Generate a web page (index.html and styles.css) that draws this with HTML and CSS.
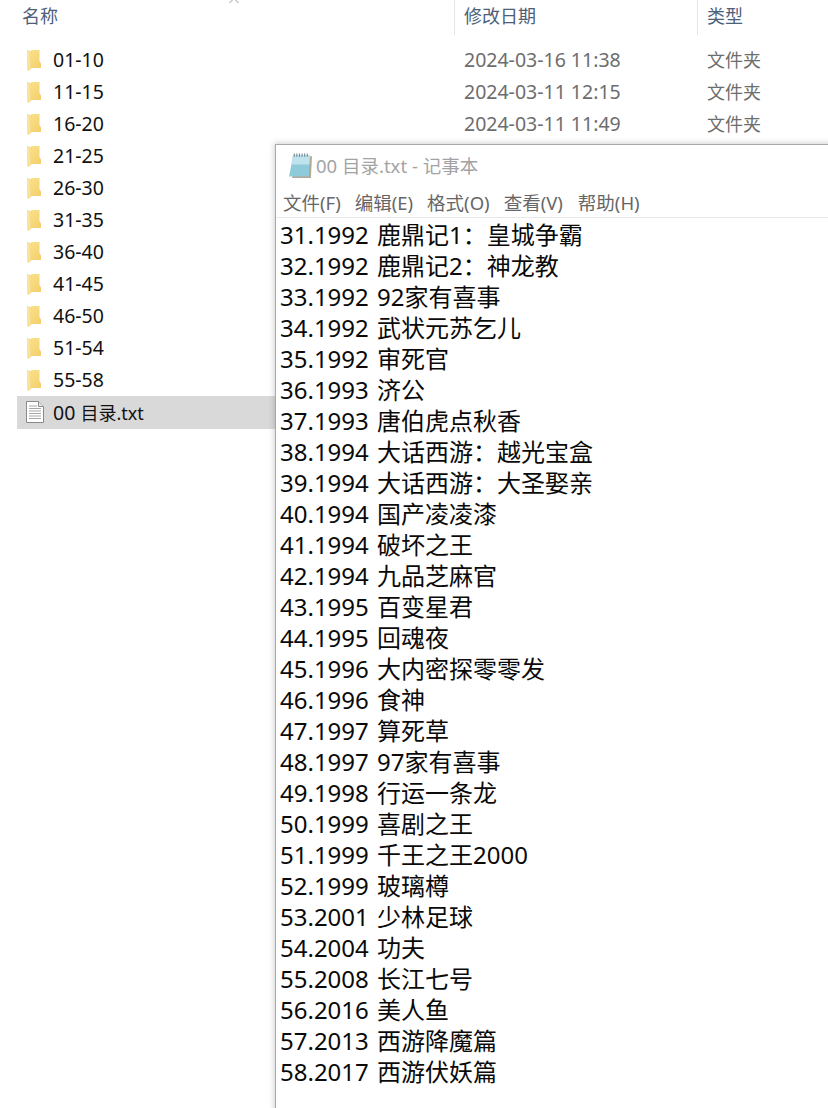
FILE: index.html
```html
<!DOCTYPE html>
<html lang="zh-CN">
<head>
<meta charset="utf-8">
<title>00 目录.txt - 记事本</title>
<link rel="stylesheet" href="styles.css">
</head>
<body>
<svg class="defs" width="0" height="0" aria-hidden="true">
  <defs>
    <linearGradient id="fg" x1="0" y1="0" x2="1" y2="1"><stop offset="0" stop-color="#fce28f"/><stop offset="1" stop-color="#f3cf6c"/></linearGradient>
    <linearGradient id="ff" x1="0" y1="0" x2="1" y2="0"><stop offset="0" stop-color="#fdeaa8"/><stop offset="1" stop-color="#f8dc8a"/></linearGradient>
    <symbol id="folder" viewBox="0 0 14 21">
      <path d="M0 0H12.500V11.500L14 13V18H4V0z" fill="url(#fg)"/>
      <path d="M0 0L4 1.500V18.500L1.500 21L0 19.500z" fill="url(#ff)" stroke="#edd083" stroke-width=".4"/>
    </symbol>
    <symbol id="txt" viewBox="0 0 18 22">
      <path d="M.5.5h12l5 5v16H.5z" fill="#fff" stroke="#8a8a8a"/>
      <path d="M12.500.5v5h5" fill="#e8e8e8" stroke="#8a8a8a"/>
      <path d="M3 5h8M3 7.500h12M3 10h12M3 12.500h12M3 15h12M3 17.500h12" stroke="#a6a6a6"/>
    </symbol>
  </defs>
</svg>
<svg class="sort" viewBox="0 0 12 3" aria-hidden="true"><path d="M1.500 3L4.500 0M7.500 0L10.500 3" stroke="#9a9a9a" fill="none"/></svg>
<main class="explorer">
  <header class="head">
    <div class="col col-name">名称</div>
    <div class="col col-date">修改日期</div>
    <div class="col col-type">类型</div>
  </header>
  <ul class="rows">
    <li class="row"><div class="name"><svg class="ic-folder"><use href="#folder"/></svg>01-10</div><div class="date">2024-03-16 11:38</div><div class="type">文件夹</div></li>
    <li class="row"><div class="name"><svg class="ic-folder"><use href="#folder"/></svg>11-15</div><div class="date">2024-03-11 12:15</div><div class="type">文件夹</div></li>
    <li class="row"><div class="name"><svg class="ic-folder"><use href="#folder"/></svg>16-20</div><div class="date">2024-03-11 11:49</div><div class="type">文件夹</div></li>
    <li class="row"><div class="name"><svg class="ic-folder"><use href="#folder"/></svg>21-25</div></li>
    <li class="row"><div class="name"><svg class="ic-folder"><use href="#folder"/></svg>26-30</div></li>
    <li class="row"><div class="name"><svg class="ic-folder"><use href="#folder"/></svg>31-35</div></li>
    <li class="row"><div class="name"><svg class="ic-folder"><use href="#folder"/></svg>36-40</div></li>
    <li class="row"><div class="name"><svg class="ic-folder"><use href="#folder"/></svg>41-45</div></li>
    <li class="row"><div class="name"><svg class="ic-folder"><use href="#folder"/></svg>46-50</div></li>
    <li class="row"><div class="name"><svg class="ic-folder"><use href="#folder"/></svg>51-54</div></li>
    <li class="row"><div class="name"><svg class="ic-folder"><use href="#folder"/></svg>55-58</div></li>
    <li class="row selected"><div class="name"><svg class="ic-txt"><use href="#txt"/></svg><span class="fname">00 <span class="cjk">目录.txt</span></span></div></li>
  </ul>
</main>
<section class="notepad">
  <div class="titlebar">
    <svg class="ic-notepad" viewBox="0 0 24 24" aria-hidden="true">
      <path d="M7 3h16l-1 21H4z" fill="#8f8468" opacity=".7"/>
      <path d="M5 2h16l-1 20.500H1z" fill="#8fcadb"/>
      <path d="M5 2h16l-.5 9H3z" fill="#bfe3ec"/>
      <path d="M6 .5v3M8.500 .5v3M11 .5v3M13.500 .5v3M16 .5v3M18.500 .5v3" stroke="#6f7f88" stroke-width="1"/>
    </svg>
    <span class="title">00 目录.txt - 记事本</span>
  </div>
  <nav class="menu"><span>文件(F)</span><span>编辑(E)</span><span>格式(O)</span><span>查看(V)</span><span class="help">帮助(H)</span></nav>
  <div class="content">
    <div>31.1992 鹿鼎记1：皇城争霸</div>
    <div>32.1992 鹿鼎记2：神龙教</div>
    <div>33.1992 92家有喜事</div>
    <div>34.1992 武状元苏乞儿</div>
    <div>35.1992 审死官</div>
    <div>36.1993 济公</div>
    <div>37.1993 唐伯虎点秋香</div>
    <div>38.1994 大话西游：越光宝盒</div>
    <div>39.1994 大话西游：大圣娶亲</div>
    <div>40.1994 国产凌凌漆</div>
    <div>41.1994 破坏之王</div>
    <div>42.1994 九品芝麻官</div>
    <div>43.1995 百变星君</div>
    <div>44.1995 回魂夜</div>
    <div>45.1996 大内密探零零发</div>
    <div>46.1996 食神</div>
    <div>47.1997 算死草</div>
    <div>48.1997 97家有喜事</div>
    <div>49.1998 行运一条龙</div>
    <div>50.1999 喜剧之王</div>
    <div>51.1999 千王之王2000</div>
    <div>52.1999 玻璃樽</div>
    <div>53.2001 少林足球</div>
    <div>54.2004 功夫</div>
    <div>55.2008 长江七号</div>
    <div>56.2016 美人鱼</div>
    <div>57.2013 西游降魔篇</div>
    <div>58.2017 西游伏妖篇</div>
  </div>
</section>
</body>
</html>
```
FILE: styles.css
```css
* { box-sizing: border-box; }
html, body { margin: 0; height: 100%; }
body {
  position: relative;
  width: 828px;
  height: 1108px;
  overflow: hidden;
  background: #fff;
  font-family: "Noto Sans", "Noto Sans CJK SC", sans-serif;
}
.defs { position: absolute; }
.sort { position: absolute; left: 228px; top: 0; width: 12px; height: 3px; }
.explorer { padding-left: 17px; }
.head { display: flex; height: 35px; color: #4c607a; font-size: 18px; line-height: 32px; }
.col { height: 35px; }
.col-name { width: 437px; padding-left: 5px; }
.col-date { width: 243px; padding-left: 9px; border-left: 1px solid #e5e5e5; }
.col-type { padding-left: 9px; border-left: 1px solid #e5e5e5; flex: 1; }
.rows { list-style: none; margin: 9px 0 0; padding: 0; }
.row { display: flex; height: 32px; align-items: flex-start; color: #6d6d6d; }
.row.selected { background: #d9d9d9; width: 258px; height: 33px; }
.name { width: 437px; height: 32px; display: flex; align-items: center; color: #111; font-size: 19.500px; line-height: 30px; padding-left: 10px; flex: none; }
.fname { height: 30px; margin-top: 1px; }
.date { width: 243px; padding-left: 10px; flex: none; font-size: 19.500px; line-height: 31px; }
.type { padding-left: 10px; font-size: 18px; line-height: 32px; }
.ic-folder { width: 14px; height: 21px; margin-right: 12px; flex: none; }
.ic-txt { width: 18px; height: 22px; margin-right: 9px; margin-left: -1px; flex: none; }
.cjk { font-size: 18px; }
.notepad {
  position: absolute;
  left: 275px;
  top: 144px;
  width: 560px;
  height: 970px;
  background: #fff;
  border: 1px solid #a8a8a8;
  box-shadow: -1px -1px 6px rgba(0, 0, 0, .18);
}
.titlebar { display: flex; align-items: center; height: 42px; padding: 0 0 2px 12px; margin-bottom: 2px; }
.ic-notepad { width: 25px; height: 25px; margin-right: 3px; flex: none; }
.title { font-size: 18.500px; color: #a3a3a3; }
.menu {
  display: flex;
  gap: 14px;
  height: 29px;
  padding-left: 7px;
  font-size: 18.500px;
  line-height: 28px;
  color: #666;
  border-bottom: 1px solid #e8e8e8;
}
.help { margin-left: 1px; }
.content { padding: 1px 0 0 4px; font-size: 24px; word-spacing: 2px; line-height: 31px; color: #0a0a0a; white-space: nowrap; }
```
